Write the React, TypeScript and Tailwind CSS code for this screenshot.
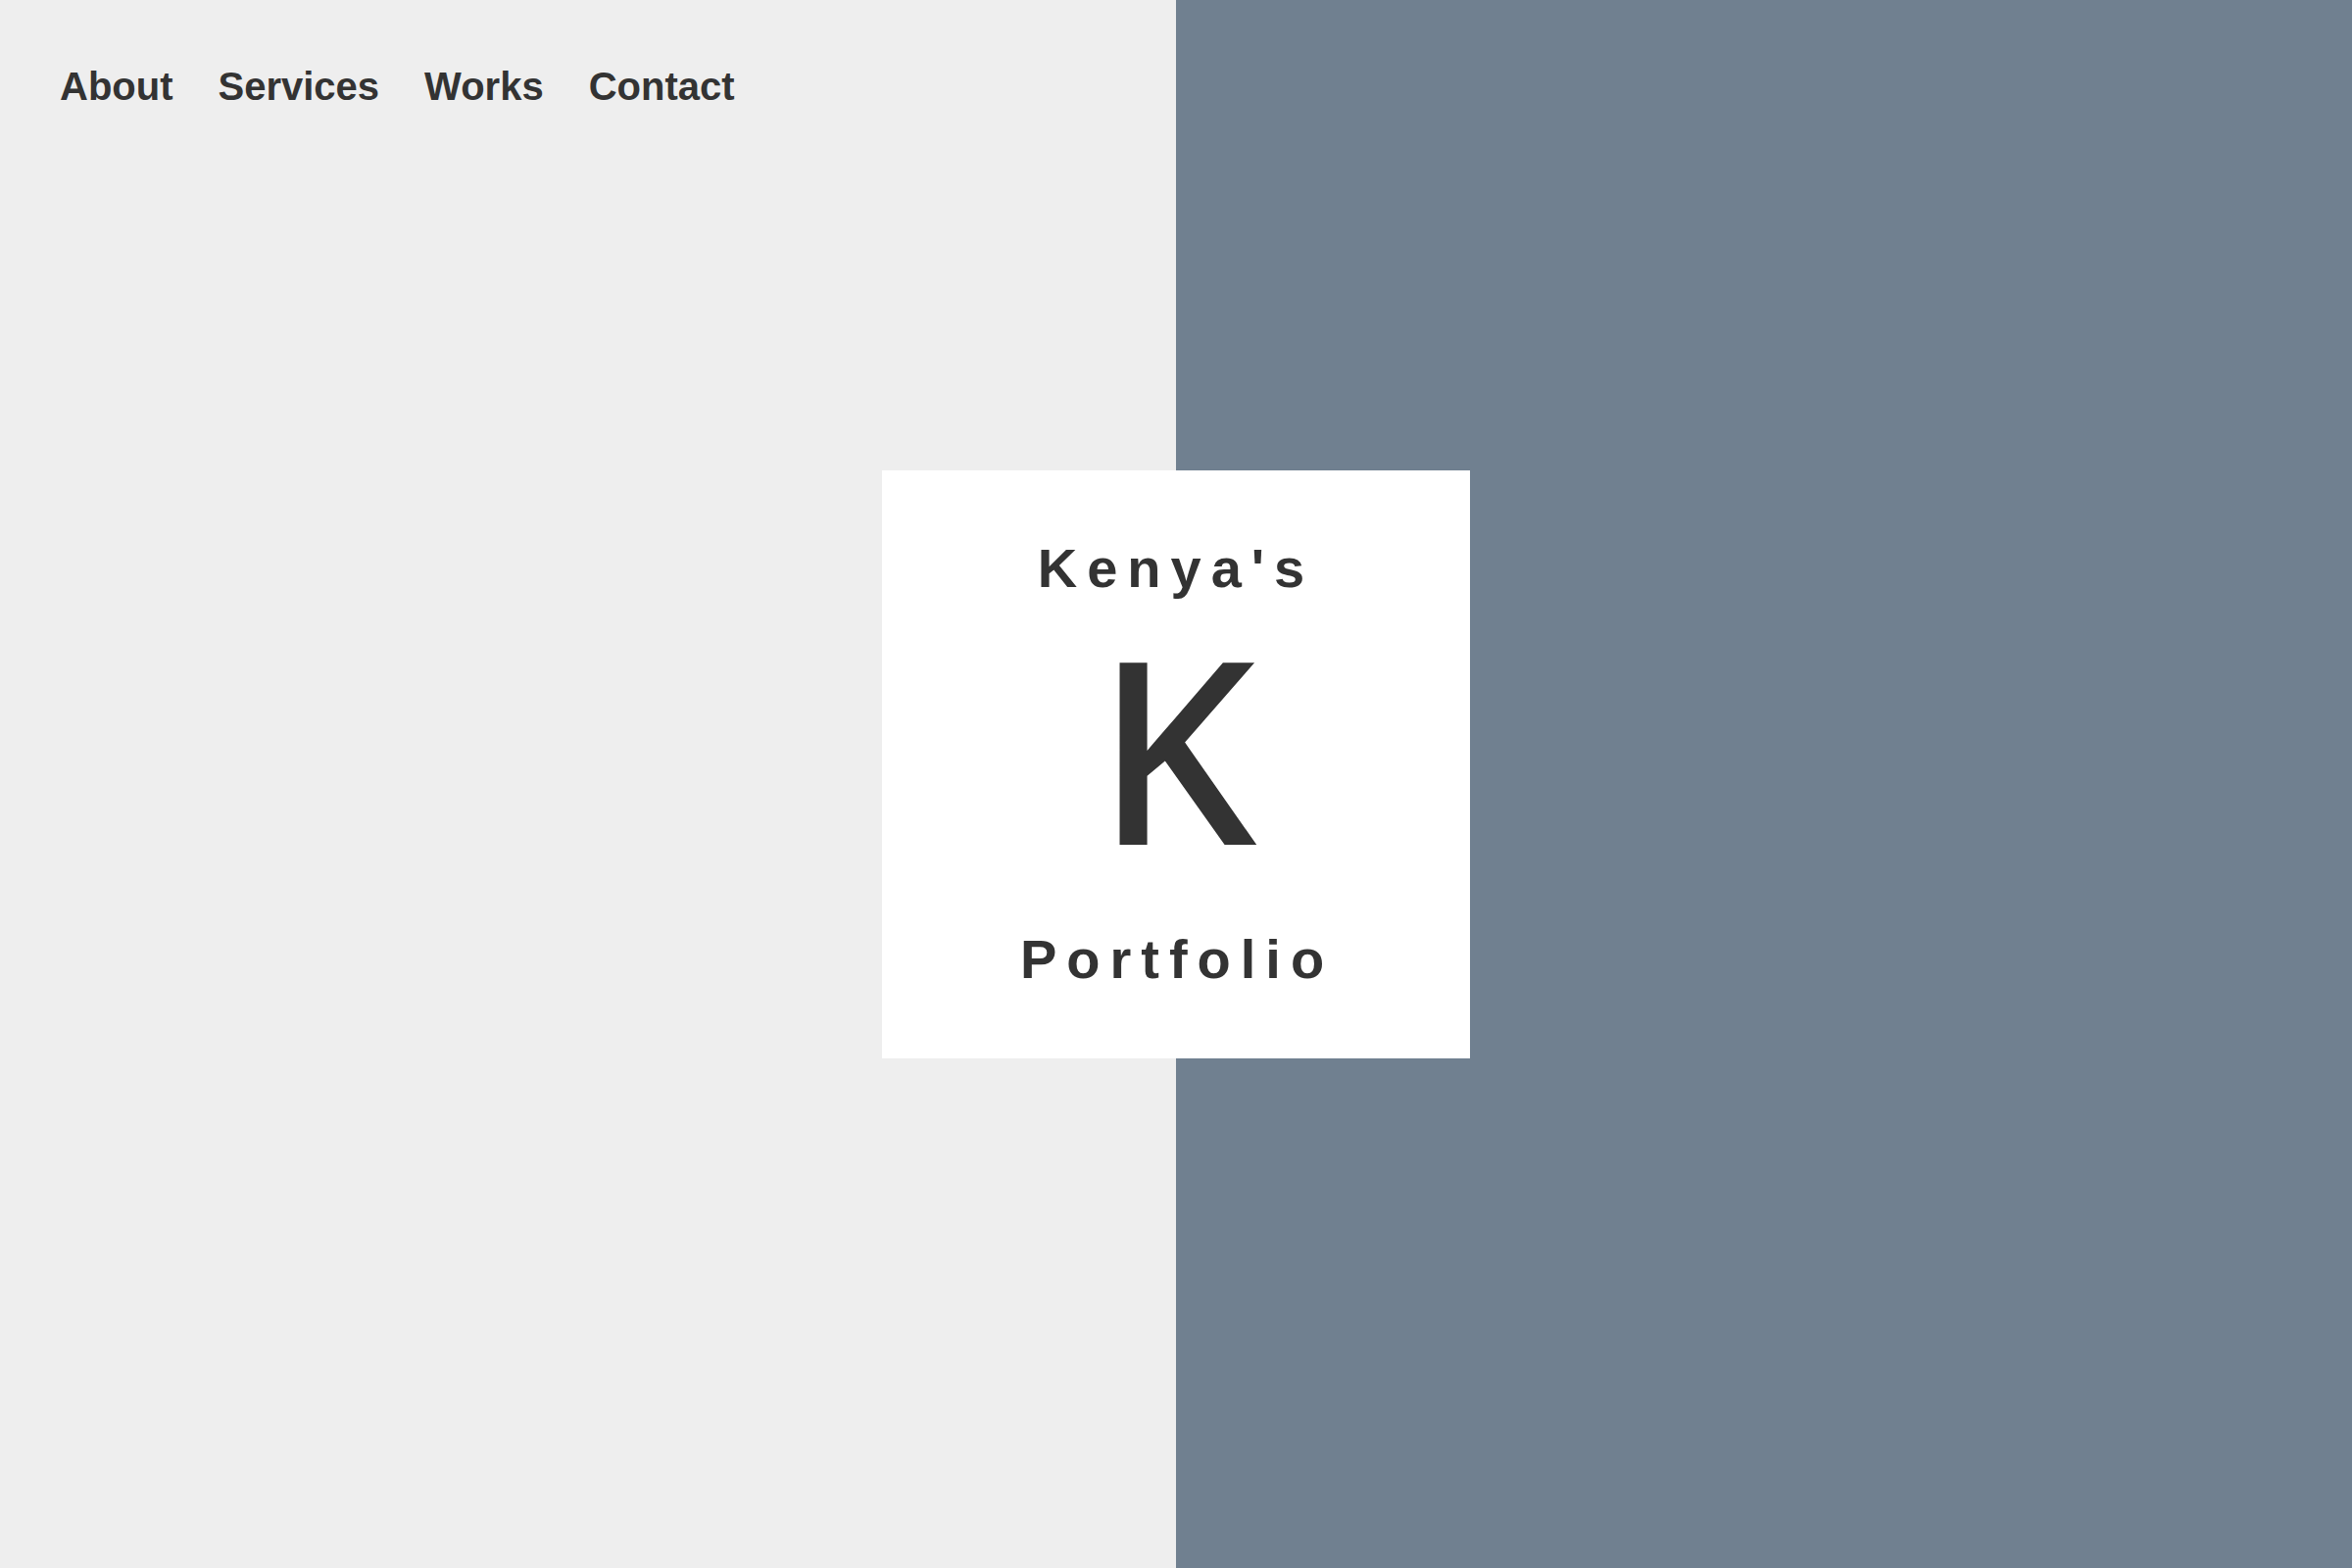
import * as React from 'react';

const navItems = ['About', 'Services', 'Works', 'Contact'];

const Nav: React.FC = () => {
  return (
    <nav className="absolute left-0 top-0 z-10 flex gap-[46px] pl-[61px] pt-[68px]">
      {navItems.map(item => (
        <a
          key={item}
          href="#"
          className="font-['Liberation_Sans',Arial,sans-serif] text-[40px] leading-none font-bold text-[#333333]"
        >
          {item}
        </a>
      ))}
    </nav>
  );
};

const LogoCard: React.FC = () => {
  return (
    <div className="absolute left-[900px] top-[480px] flex h-[600px] w-[600px] flex-col items-center bg-white pt-[72px] text-[#333333]">
      <div className="font-['Liberation_Sans',Arial,sans-serif] text-[56px] leading-none font-bold tracking-[10px]">
        Kenya's
      </div>
      <div className="mt-[49px] font-['Noto_Sans',sans-serif] text-[260px] leading-[0.8] font-medium">K</div>
      <div className="mt-[86px] pl-[2px] font-['Liberation_Sans',Arial,sans-serif] text-[56px] leading-none font-bold tracking-[10px]">
        Portfolio
      </div>
    </div>
  );
};

const App: React.FC = () => {
  return (
    <div className="relative flex h-[1600px] w-full font-['Liberation_Sans',Arial,sans-serif]">
      <div className="h-full w-1/2 bg-[#eeeeee]" />
      <div className="h-full w-1/2 bg-[#708090]" />
      <Nav />
      <LogoCard />
    </div>
  );
};

export default App;
